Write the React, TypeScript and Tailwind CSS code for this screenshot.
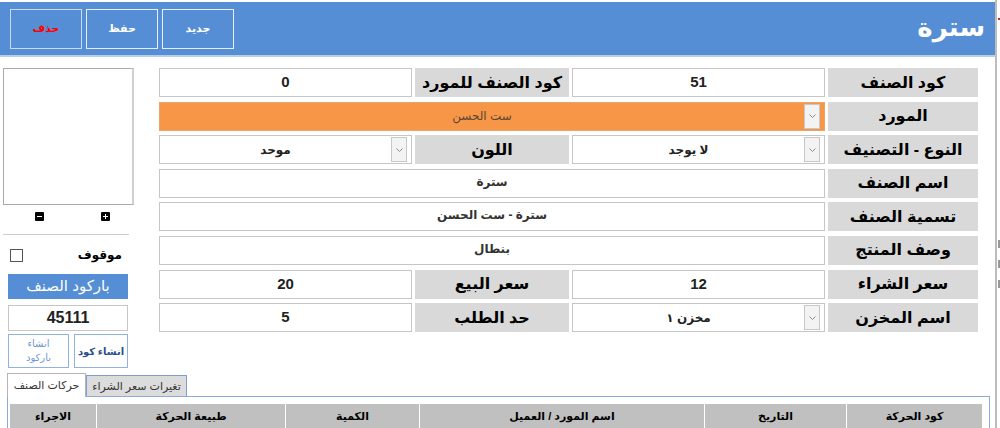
import { ReactNode } from "react";

function Chevron() {
  return (
    <svg width="7" height="4" viewBox="0 0 7 4" className="text-[#8a8a8a]">
      <polyline points="0.5,0.5 3.5,3.5 6.5,0.5" fill="none" stroke="currentColor" strokeWidth="1" />
    </svg>
  );
}

function Label({ children }: { children: ReactNode }) {
  return (
    <div className="flex h-full items-center justify-center whitespace-nowrap bg-[#d9d9d9] text-[16px] font-bold text-black">
      {children}
    </div>
  );
}

function Field({ children }: { children?: ReactNode }) {
  return (
    <div className="flex h-full items-center justify-center border border-[#c6c6c6] bg-white text-[15px] font-bold text-[#222]">
      {children}
    </div>
  );
}

function WideField({ children }: { children?: ReactNode }) {
  return (
    <div className="flex h-full justify-center border border-[#c6c6c6] bg-white pt-[3px] text-[12px] font-bold text-[#333]">
      {children}
    </div>
  );
}

function Combo({ value, orange = false }: { value: string; orange?: boolean }) {
  return (
    <div
      dir="ltr"
      className={`flex h-full items-stretch border ${
        orange ? "border-[#e9a46a] bg-[#f79646]" : "border-[#c6c6c6] bg-white"
      }`}
    >
      <div
        dir="rtl"
        className={`flex flex-1 items-center justify-center whitespace-nowrap text-[12px] ${
          orange ? "font-normal text-[#5b4636]" : "font-bold text-[#222]"
        }`}
      >
        {value}
      </div>
      <div className="my-[1px] mr-[4px] flex w-[16px] items-center justify-center border border-[#c8c8c8] bg-[#f3f3f3]">
        <Chevron />
      </div>
    </div>
  );
}

function Row({ children }: { children: ReactNode }) {
  return <div className="grid h-[29px] shrink-0 grid-cols-[150px_253px_154px_253px] gap-x-[3px]">{children}</div>;
}

function SmallIcon({ plus }: { plus?: boolean }) {
  return (
    <div className="relative h-[9px] w-[9px] rounded-[1px] bg-black">
      <div className="absolute left-[2px] top-[4px] h-[1px] w-[5px] bg-white" />
      {plus && <div className="absolute left-[4px] top-[2px] h-[5px] w-[1px] bg-white" />}
    </div>
  );
}

export default function App() {
  const cols = [
    { t: "الاجراء", w: "w-[87px]" },
    { t: "طبيعة الحركة", w: "w-[189px]" },
    { t: "الكمية", w: "w-[134px]" },
    { t: "اسم المورد / العميل", w: "w-[285px]" },
    { t: "التاريخ", w: "w-[142px]" },
    { t: "كود الحركة", w: "w-[136px]" },
  ];

  return (
    <div className="flex h-[428px] w-[1000px] overflow-hidden bg-white font-['Liberation_Sans','DejaVu_Sans',sans-serif]">
      <div className="flex w-[995px] shrink-0 flex-col pt-[2px]">
        {/* header */}
        <div className="flex h-[53px] shrink-0 items-center justify-between bg-[#558ed5] px-[10px]">
          <div className="flex gap-[4px]">
            <button className="h-[40px] w-[72px] border border-[#c9dbf2] text-[11px] font-bold text-[#ff0000]">حذف</button>
            <button className="h-[40px] w-[72px] border border-[#e6eefa] text-[11px] font-bold text-white">حفظ</button>
            <button className="h-[40px] w-[72px] border border-[#e6eefa] text-[11px] font-bold text-white">جديد</button>
          </div>
          <div className="pb-[4px] text-[26px] font-bold leading-none text-white">سترة</div>
        </div>
        <div className="h-[2px] shrink-0 bg-[#b7cdec]" />

        {/* body */}
        <div dir="rtl" className="flex shrink-0 pr-[17px] pt-[11px]">
          <div className="flex w-[819px] flex-col gap-y-[4.6px]">
            <Row>
              <Label>كود الصنف</Label>
              <Field>51</Field>
              <Label>كود الصنف للمورد</Label>
              <Field>0</Field>
            </Row>
            <Row>
              <Label>المورد</Label>
              <div className="col-span-3">
                <Combo value="ست الحسن" orange />
              </div>
            </Row>
            <Row>
              <Label>النوع - التصنيف</Label>
              <Combo value="لا يوجد" />
              <Label>اللون</Label>
              <Combo value="موحد" />
            </Row>
            <Row>
              <Label>اسم الصنف</Label>
              <div className="col-span-3">
                <WideField>سترة</WideField>
              </div>
            </Row>
            <Row>
              <Label>تسمية الصنف</Label>
              <div className="col-span-3">
                <WideField>سترة - ست الحسن</WideField>
              </div>
            </Row>
            <Row>
              <Label>وصف المنتج</Label>
              <div className="col-span-3">
                <WideField>بنطال</WideField>
              </div>
            </Row>
            <Row>
              <Label>سعر الشراء</Label>
              <Field>12</Field>
              <Label>سعر البيع</Label>
              <Field>20</Field>
            </Row>
            <Row>
              <Label>اسم المخزن</Label>
              <Combo value="مخزن ١" />
              <Label>حد الطلب</Label>
              <Field>5</Field>
            </Row>
          </div>

          {/* left panel */}
          <div dir="ltr" className="mr-[25px] flex w-[131px] flex-col">
            <div className="h-[137px] w-[131px] border border-[#aaaaaa] border-r-2 border-r-[#cfcfcf] bg-white" />
            <div className="flex h-[20px] items-center justify-between pl-[32px] pr-[24px] pt-[3px]">
              <SmallIcon />
              <SmallIcon plus />
            </div>
            <div className="mt-[9px] h-[1px] w-[126px] bg-[#cccccc]" />
            <div className="mt-[13px] flex h-[14px] items-center justify-between pl-[7px] pr-[12px]">
              <div className="h-[13px] w-[13px] border border-[#555] bg-white" />
              <div className="text-[12px] font-bold text-black">موقوف</div>
            </div>
            <div className="ml-[5px] mt-[12px] flex h-[25px] w-[120px] items-center justify-center whitespace-nowrap bg-[#558ed5] text-[15px] text-white">
              باركود الصنف
            </div>
            <div className="ml-[5px] mt-[6px] flex h-[26px] w-[120px] items-center justify-center border border-[#c6c6c6] text-[16px] font-bold text-[#222]">
              45111
            </div>
            <div className="ml-[5px] mt-[3px] flex w-[120px] gap-[5px]">
              <div className="flex h-[34px] w-[61px] flex-col items-center justify-center border border-[#8fb1e3] text-[10px] leading-[14px] text-[#6f97d4]">
                <span>انشاء</span>
                <span>باركود</span>
              </div>
              <div className="flex h-[34px] w-[54px] items-center justify-center whitespace-nowrap border border-[#8fb1e3] text-[10px] font-bold text-[#2b4f8a]">
                انشاء كود
              </div>
            </div>
          </div>
        </div>

        {/* tabs */}
        <div className="mt-[5px] flex shrink-0 flex-col pl-[7px]">
          <div className="flex items-end">
            <div className="relative z-10 -mb-[1px] flex h-[24px] w-[79px] items-center justify-center whitespace-nowrap border border-b-0 border-[#b5b5b5] bg-white text-[11px] text-[#333]">
              حركات الصنف
            </div>
            <div className="flex h-[21px] w-[101px] items-center justify-center whitespace-nowrap border border-b-0 border-[#7f9ed6] bg-[#dcdcdc] text-[11px] text-[#333]">
              تغيرات سعر الشراء
            </div>
          </div>
          <div className="h-[60px] w-[983px] border border-[#8eaadb] bg-white pl-[2px] pt-[7px]">
            <div dir="ltr" className="flex h-[24px]">
              {cols.map((c) => (
                <div
                  key={c.t}
                  className={`${c.w} flex items-center justify-center whitespace-nowrap border-r border-white bg-[#c0c0c0] text-[11px] font-bold text-black`}
                >
                  {c.t}
                </div>
              ))}
            </div>
          </div>
        </div>
      </div>

      {/* background window sliver */}
      <div className="flex w-[5px] shrink-0 flex-col border-l-2 border-[#bdbdbd] bg-white">
        <div className="h-[18px]" />
        <div className="ml-[1px] h-[2px] w-[3px] bg-[#b33]" />
        <div className="h-[220px]" />
        <div className="ml-[1px] h-[8px] w-[2px] bg-[#999]" />
        <div className="h-[12px]" />
        <div className="ml-[1px] h-[8px] w-[2px] bg-[#999]" />
        <div className="h-[12px]" />
        <div className="ml-[1px] h-[8px] w-[2px] bg-[#999]" />
      </div>
    </div>
  );
}
